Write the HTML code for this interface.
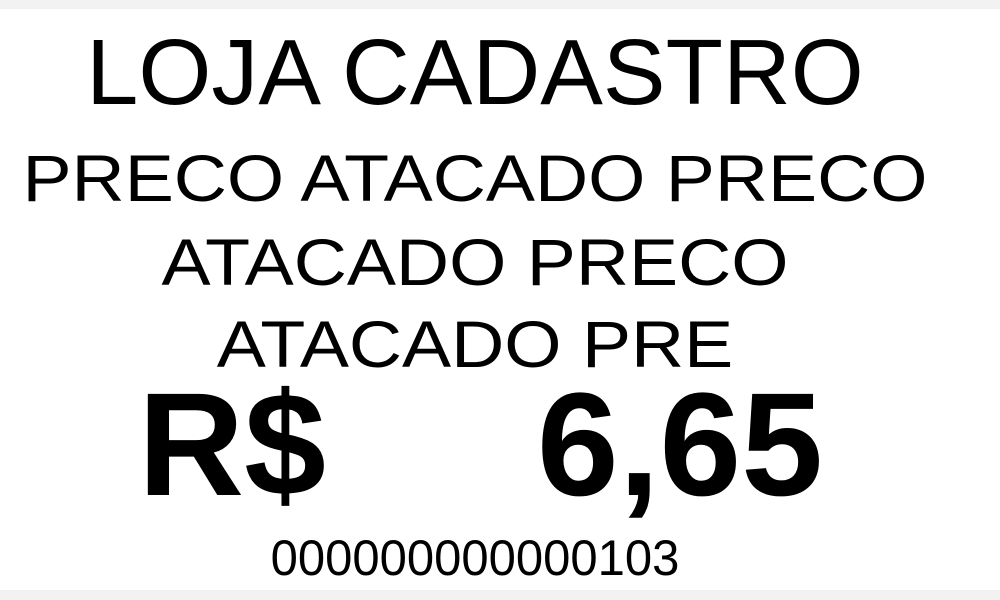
<!DOCTYPE html>
<html><head><meta charset="utf-8"><style>
html,body{margin:0;padding:0;background:#f2f2f2;}
#w{position:relative;width:1000px;height:600px;overflow:hidden;}
#card{position:absolute;left:0;top:9px;width:1000px;height:581px;background:#fff;}
.t{position:absolute;left:0;width:950px;text-align:center;font-family:"Liberation Sans",sans-serif;color:#000;white-space:nowrap;line-height:1;transform-origin:475px 0;}
.s{transform:scaleX(1.115);}
</style></head><body><div id="w"><div id="card"></div>
<div class="t" style="top:26px;font-size:93px;transform:scaleX(1.01);">LOJA CADASTRO</div>
<div class="t s" style="top:145px;font-size:66px;">PRECO ATACADO PRECO</div>
<div class="t s" style="top:229px;font-size:66px;">ATACADO PRECO</div>
<div class="t s" style="top:311px;font-size:66px;">ATACADO PRE</div>
<div class="t" style="top:372px;font-size:147px;font-weight:bold;width:auto;left:138px;text-align:left;">R$</div>
<div class="t" style="top:372px;font-size:147px;font-weight:bold;width:auto;left:auto;right:177px;text-align:right;">6,65</div>
<div class="t" style="top:533px;font-size:50px;transform:scaleX(0.98);">000000000000103</div>
</div></body></html>
